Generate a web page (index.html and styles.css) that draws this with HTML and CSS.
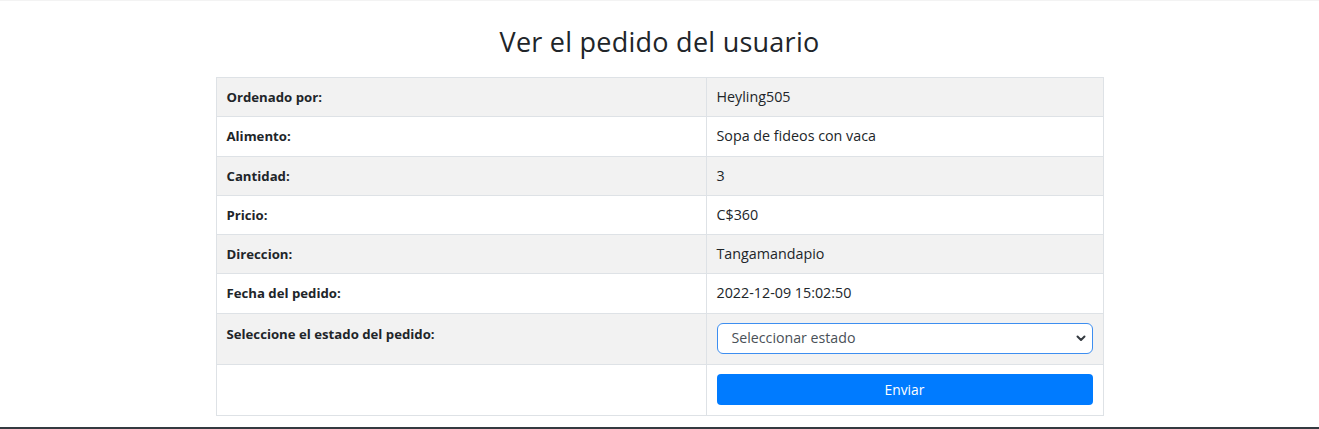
FILE: index.html
```html
<!DOCTYPE html>
<html lang="es">
<head>
<meta charset="utf-8">
<title>Ver el pedido del usuario</title>
<link rel="stylesheet" href="styles.css">
</head>
<body>
<div class="topline"></div>
<main class="page">
  <h3 class="title">Ver el pedido del usuario</h3>
  <table class="order">
    <tbody>
      <tr class="odd"><th>Ordenado por:</th><td>Heyling505</td></tr>
      <tr><th>Alimento:</th><td>Sopa de fideos con vaca</td></tr>
      <tr class="odd"><th>Cantidad:</th><td>3</td></tr>
      <tr><th>Pricio:</th><td>C$360</td></tr>
      <tr class="odd"><th>Direccion:</th><td>Tangamandapio</td></tr>
      <tr><th>Fecha del pedido:</th><td>2022-12-09 15:02:50</td></tr>
      <tr class="odd tall"><th>Seleccione el estado del pedido:</th>
        <td>
          <div class="select">
            <span>Seleccionar estado</span>
            <svg width="10" height="8" viewBox="0 0 10 8"><path d="M1.5 2.5 L5 6 L8.5 2.5" fill="none" stroke="#343a40" stroke-width="2" stroke-linecap="round" stroke-linejoin="round"/></svg>
          </div>
        </td></tr>
      <tr class="tall"><th></th><td><button class="btn">Enviar</button></td></tr>
    </tbody>
  </table>
</main>
<footer class="footer"></footer>
</body>
</html>
```
FILE: styles.css
```css
* { box-sizing: border-box; }
html, body { margin: 0; padding: 0; }
body {
  font-family: "Open Sans", "Liberation Sans", sans-serif;
  color: #212529;
  background: #fff;
  height: 429px;
  overflow: hidden;
  position: relative;
}
.topline { height: 1px; background: #f3f3f3; }
.page {
  display: flex;
  flex-direction: column;
  align-items: center;
}
.title {
  margin: 24px 0 18px;
  font-size: 27px;
  font-weight: 400;
  line-height: 34px;
  letter-spacing: 0.25px;
}
.order {
  width: 888px;
  border-collapse: collapse;
}
.order th, .order td {
  border: 1px solid #dee2e6;
  padding: 8px 10px;
  line-height: 22.3px;
  text-align: left;
  vertical-align: top;
}
.order th { width: 490px; font-weight: 700; font-size: 13.2px; }
.order td { font-weight: 400; font-size: 14.3px; }
.order tr.odd { background: #f2f2f2; }
.order tr.tall th, .order tr.tall td { padding-top: 9px; padding-bottom: 10px; }
.select {
  height: 31px;
  border: 1px solid #3d8ef0;
  border-radius: 6px;
  background: #fff;
  display: flex;
  align-items: center;
  justify-content: space-between;
  padding: 0 6px 0 14px;
  color: #495057;
  font-size: 14.2px;
}
.btn {
  display: block;
  width: 100%;
  height: 31px;
  border: none;
  border-radius: 4px;
  background: #007bff;
  color: #fff;
  font-family: inherit;
  font-size: 13.8px;
  font-weight: 500;
}
.footer {
  position: absolute;
  left: 0; right: 0; top: 427px;
  height: 2px;
  background: #343a40;
}
```
